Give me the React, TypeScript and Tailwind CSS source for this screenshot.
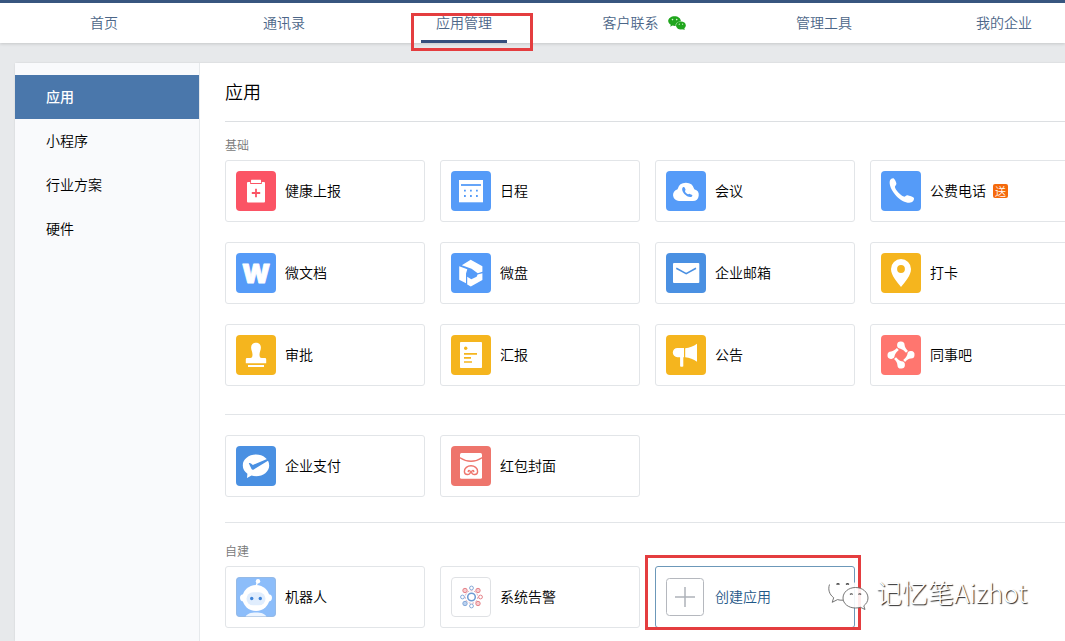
import type { ReactNode } from "react";

type AppItem = {
  name: string;
  icon: ReactNode;
  badge?: string;
};

type TileProps = {
  bg: string;
  children: ReactNode;
};

const Tile: React.FC<TileProps> = ({ bg, children }) => (
  <svg viewBox="0 0 40 40" className="size-10 shrink-0" aria-hidden="true">
    <rect width="40" height="40" rx="4" fill={bg} />
    {children}
  </svg>
);

const blue = "#559bf8";
const deepBlue = "#4a90e2";
const yellow = "#f5b51e";

const HealthIcon = () => (
  <Tile bg="#fb5465">
    <rect x="11" y="11" width="18" height="20.5" rx="1" fill="#fff" />
    <rect x="14.2" y="8" width="11.6" height="5" fill="#fb5465" />
    <rect x="15" y="8.8" width="10" height="3.2" rx="0.5" fill="#fff" />
    <path d="M20 17.8v8.4M15.8 22h8.4" stroke="#fb5465" strokeWidth="1.8" />
  </Tile>
);

const CalendarIcon = () => (
  <Tile bg={blue}>
    <rect x="8" y="9" width="24" height="22.3" fill="#fff" />
    <path d="M10 14h20" stroke={blue} strokeWidth="1.8" />
    <path
      d="M13 19.7h1.8M19 19.7h1.8M25 19.7h1.8M13 25h1.8M19 25h1.8M25 25h1.8"
      stroke={blue}
      strokeWidth="1.8"
    />
  </Tile>
);

const MeetingIcon = () => (
  <Tile bg={blue}>
    <path
      d="M13.2 30a6 6 0 0 1-1.7-11.8A8.7 8.7 0 0 1 28.3 18.2 6 6 0 0 1 26.8 30z"
      fill="#fff"
    />
    <path
      d="M16.7 16.5c.8-.7 1.8-.4 2.2.5l.6 1.5c.2.7-.6 1.2-.5 1.7.3 1.2 1.7 2.6 3 3.1.6.2 1-.6 1.7-.4l2 .8c.8.4.9 1.2.2 1.8-1.6 1.2-4.3.4-6.6-1.7-2.5-2.3-4-5.7-2.6-7.3z"
      fill={blue}
    />
  </Tile>
);

const PhoneIcon = () => (
  <Tile bg={blue}>
    <path
      d="M9 9.3c.8-1.6 2.7-2.6 3.8-1.9 1.2.8 2.3 3.4 2.6 5.2.2 1.6-1.700 2.300-1.500 3.500.6 3.100 5.600 8.400 8.900 9.500 1.400.4 2.200-1.600 3.700-1.300 1.900.4 5.400 1.400 6.300 2.500.8 1.200-.4 3.700-2.300 4.500-4.100 1.500-10.600-1.600-15.200-6.400C10.800 20.300 7.500 13.500 9 9.300z"
      fill="#fff"
    />
  </Tile>
);

const DocIcon = () => (
  <Tile bg={blue}>
    <text
      x="20"
      y="29.5"
      textAnchor="middle"
      fill="#fff"
      stroke="#fff"
      strokeWidth="0.8"
      strokeLinejoin="round"
      className="font-['Inter',sans-serif] text-[26px] font-black"
    >
      W
    </text>
  </Tile>
);

const DriveIcon = () => (
  <Tile bg={blue}>
    <path d="M10.8 12.2 19.7 6.8 31.400 13.300V18.800L26.700 20.300 20.600 15.800z" fill="#fff" />
    <path d="M8.200 13.200 16.300 16.300 15 20.500V30.200L8.200 26.800z" fill="#fff" />
    <path d="M31.400 20.300V27L19.800 33.400 16.200 31.400V23.800L20.300 26.200 25.600 23.800 26.600 21.600z" fill="#fff" />
  </Tile>
);

const MailIcon = () => (
  <Tile bg={deepBlue}>
    <rect x="7" y="10" width="26.3" height="20" rx="1" fill="#fff" />
    <path d="M10.300 15.300 20.200 20.600 30 15.300" fill="none" stroke={deepBlue} strokeWidth="1.6" />
  </Tile>
);

const PinIcon = () => (
  <Tile bg={yellow}>
    <path
      fillRule="evenodd"
      d="M20 6a10 10 0 0 0-10 10c0 6.500 6 13 10 18 4-5 10-11.500 10-18A10 10 0 0 0 20 6zm0 6.100a3.900 3.900 0 1 1 0 7.800 3.900 3.900 0 0 1 0-7.800z"
      fill="#fff"
    />
  </Tile>
);

const StampIcon = () => (
  <Tile bg={yellow}>
    <path
      d="M20 7.700c2.900 0 4.900 2 4.900 4.700 0 2.800-1.400 4.300-1.400 7 0 2.300.6 3.600 2.300 3.600H29a1.200 1.200 0 0 1 1.200 1.200v4H9.800v-4A1.200 1.200 0 0 1 11 23h3.200c1.700 0 2.300-1.300 2.300-3.600 0-2.700-1.400-4.200-1.400-7 0-2.700 2-4.700 4.900-4.700z"
      fill="#fff"
    />
    <rect x="12" y="30" width="16" height="2" fill="#fff" />
  </Tile>
);

const ReportIcon = () => (
  <Tile bg={yellow}>
    <rect x="9" y="7" width="22" height="26" rx="0.8" fill="#fff" />
    <circle cx="14.7" cy="13.3" r="1.7" fill={yellow} />
    <path d="M13 18.800h13M13 22.900h7M13 27h8" stroke={yellow} strokeWidth="1.7" />
  </Tile>
);

const NoticeIcon = () => (
  <Tile bg={yellow}>
    <path d="M18 13v9.200h-.7v9.100q-1.600 1-3.200 0V22.200h-2.700a4.600 4.600 0 0 1 0-9.200z" fill="#fff" />
    <path d="M19.200 13.200C23.500 13 27.500 11.200 31 8.700v18c-3.500-2.500-7.500-4.300-11.800-4.500z" fill="#fff" />
  </Tile>
);

const petal =
  "M20 6.500a3.600 3.600 0 0 1 3.600 3.600c.1 2.200 1.500 4 3.400 5.800l-2 1.900c-1.600-1.900-3.300-3.500-5.600-4.100A3.600 3.600 0 0 1 20 6.500z";

const ColleagueIcon = () => (
  <Tile bg="#ff766f">
    <g fill="#fff">
      <path d={petal} />
      <path d={petal} transform="rotate(90 20 20)" />
      <path d={petal} transform="rotate(180 20 20)" />
      <path d={petal} transform="rotate(270 20 20)" />
    </g>
  </Tile>
);

const PayIcon = () => (
  <Tile bg={deepBlue}>
    <path
      d="M20 8.600c7.300 0 13.200 4.800 13.200 10.800S27.300 30.200 20 30.200c-1.600 0-3.100-.2-4.500-.6L11 32l.4-4.300C8.600 25.700 6.800 22.700 6.800 19.400 6.800 13.400 12.700 8.600 20 8.600z"
      fill="#fff"
    />
    <path d="M12.800 17.300c1.200-.7 2.300.6 4.100 1.600L32.200 12.600l1 1.400-15.400 9.400c-1 .6-1.900.4-2.400-.6z" fill={deepBlue} />
  </Tile>
);

const PacketIcon = () => (
  <Tile bg="#ee756c">
    <rect x="9" y="7" width="22" height="25.7" rx="1.5" fill="#fff" />
    <g fill="none" stroke="#ee756c" strokeWidth="1.4" strokeLinecap="round">
      <path d="M8.500 11.500Q20 19 31.500 11.500" />
      <path d="M17.200 25.500c.3-1.400 2.300-1.200 2.200.5-.1 3.600-6 3.400-6-.6 0-3.200 3-5.600 6.600-5.600s6.600 2.400 6.600 5.600c0 4-5.900 4.200-6 .6-.1-1.700 1.900-1.900 2.200-.5" />
    </g>
  </Tile>
);

const RobotIcon = () => (
  <Tile bg="#8cbdfa">
    <path d="M9.500 40c1-3 5.400-4.400 10.500-4.400S29.500 37 30.500 40z" fill="#edf5ff" />
    <path d="M20 9.500 21.500 5" stroke="#fff" strokeWidth="1.4" />
    <circle cx="22" cy="4.300" r="2.200" fill="#fff" />
    <circle cx="7.600" cy="20.800" r="3.600" fill="#fff" />
    <circle cx="32.400" cy="20.800" r="3.600" fill="#fff" />
    <ellipse cx="20" cy="21" rx="13.500" ry="13" fill="#fff" />
    <rect x="10.500" y="15.300" width="19" height="13" rx="6.500" fill="#e0edfd" />
    <circle cx="15.700" cy="21.500" r="1.700" fill="#3d83d8" />
    <circle cx="24.300" cy="21.500" r="1.700" fill="#3d83d8" />
    <rect x="0.500" y="0.500" width="39" height="39" rx="3.500" fill="none" stroke="#9bb8d8" strokeOpacity="0.6" />
  </Tile>
);

const AlarmIcon = () => (
  <Tile bg="#fff">
    <rect x="0.500" y="0.500" width="39" height="39" rx="3.500" fill="none" stroke="#dfe1e4" />
    <g fill="none" strokeWidth="1">
      <circle cx="20.500" cy="20" r="3.800" stroke="#6d9bd3" strokeWidth="1.5" />
      <circle cx="20.500" cy="20" r="6.300" stroke="#dba9b6" strokeDasharray="2 1.500" />
      <g stroke="#86a9d8">
        <circle cx="20.500" cy="11" r="1.900" />
        <circle cx="20.500" cy="29" r="1.900" />
        <circle cx="11.500" cy="20" r="1.900" />
        <circle cx="14" cy="26.500" r="2.200" fill="#b9d1ef" />
      </g>
      <g stroke="#e58289" fill="#f7cdd0">
        <circle cx="14" cy="13.500" r="2.200" />
        <circle cx="27" cy="13.500" r="2.200" />
        <circle cx="27" cy="26.500" r="2.200" />
        <circle cx="29.500" cy="20" r="1.900" fill="none" />
      </g>
    </g>
  </Tile>
);

const WechatIcon = () => (
  <svg viewBox="0 0 18 14" className="h-3.5 w-[18px]" aria-hidden="true">
    <path
      d="M6.600.3C10 .3 12.800 2.400 12.900 5.200 9.600 5.300 7.300 7.400 7.700 10c-1.100.1-2.200 0-3.200-.4L2.200 10.800l.6-2C1.200 7.900.2 6.600.2 5.100.2 2.400 3.100.3 6.600.3z"
      fill="#20a61d"
    />
    <ellipse cx="12.900" cy="9.400" rx="4.900" ry="4" fill="#20a61d" />
    <path d="m14 12.900 2.700 1-.5-2z" fill="#20a61d" />
    <g fill="#d5f3cf">
      <circle cx="4.500" cy="3.600" r="0.8" />
      <circle cx="8.700" cy="3.600" r="0.8" />
      <circle cx="11.300" cy="8.200" r="0.600" />
      <circle cx="14.600" cy="8.200" r="0.600" />
    </g>
  </svg>
);

const navItems = ["首页", "通讯录", "应用管理", "客户联系", "管理工具", "我的企业"];
const menuItems = ["应用", "小程序", "行业方案", "硬件"];

const baseApps: AppItem[] = [
  { name: "健康上报", icon: <HealthIcon /> },
  { name: "日程", icon: <CalendarIcon /> },
  { name: "会议", icon: <MeetingIcon /> },
  { name: "公费电话", icon: <PhoneIcon />, badge: "送" },
  { name: "微文档", icon: <DocIcon /> },
  { name: "微盘", icon: <DriveIcon /> },
  { name: "企业邮箱", icon: <MailIcon /> },
  { name: "打卡", icon: <PinIcon /> },
  { name: "审批", icon: <StampIcon /> },
  { name: "汇报", icon: <ReportIcon /> },
  { name: "公告", icon: <NoticeIcon /> },
  { name: "同事吧", icon: <ColleagueIcon /> },
];

const payApps: AppItem[] = [
  { name: "企业支付", icon: <PayIcon /> },
  { name: "红包封面", icon: <PacketIcon /> },
];

const customApps: AppItem[] = [
  { name: "机器人", icon: <RobotIcon /> },
  { name: "系统告警", icon: <AlarmIcon /> },
];

const AppCard: React.FC<AppItem> = ({ name, icon, badge }) => (
  <a
    href="#"
    className="flex items-center rounded-[3px] border border-[#e2e5e8] p-2.5 text-sm text-black"
  >
    {icon}
    <span className="ml-[9px] pb-0.5">{name}</span>
    {badge && (
      <span className="ml-[7px] rounded-xs bg-[#f56a0c] px-0.5 text-[11px] leading-[14px] text-white">
        {badge}
      </span>
    )}
  </a>
);

type AppGridProps = {
  apps: AppItem[];
  children?: ReactNode;
};

const AppGrid: React.FC<AppGridProps> = ({ apps, children }) => (
  <div className="grid grid-cols-[repeat(4,200px)] gap-x-[15px] gap-y-5">
    {apps.map((app) => (
      <AppCard key={app.name} {...app} />
    ))}
    {children}
  </div>
);

const Watermark = () => (
  <div className="pointer-events-none absolute top-2 left-[172px] flex items-center gap-[7px]">
    <svg viewBox="0 0 42 36" className="h-9 w-[42px]" aria-hidden="true">
      <g fill="#fff" fillOpacity="0.9">
        <path d="M15.500 3C7.500 3 1.500 8 1.500 14.500c0 3.800 2 7 5.200 9.200l-1.500 4.600 5.300-2.700c2 .6 5 .8 7 .4L29.500 13C28.500 7 22.500 3 15.500 3z" />
        <path
          d="M28.500 13.500c7 0 12.500 4.700 12.500 10.500 0 3.200-1.700 5.900-4.200 7.800l1.200 3.700-4.500-2.200c-1.500.5-3.200.7-5 .7C21.500 34 16 29.800 16 24s5.500-10.500 12.500-10.500z"
          stroke="#666"
          strokeWidth="0.9"
        />
      </g>
      <g fill="none" stroke="#666">
        <path d="M2.500 10.500c-1.700 5-.2 10 4.200 13.200l-1.500 4.600 5.300-2.700c1.600.5 3.500.7 5.500.6" strokeWidth="0.9" />
        <path
          d="M9.500 10.500q1.500-1.500 3 0M19 10.500q1.500-1.500 3 0M23 20.500q1.300-1.500 2.600 0M31.500 20.500q1.300-1.500 2.600 0"
          stroke="#444"
          strokeWidth="1.2"
        />
      </g>
    </svg>
    <span className="text-[26px] leading-9 font-light whitespace-nowrap text-white [text-shadow:1px_1px_1px_#222]">
      记忆笔Aizhot
    </span>
  </div>
);

const CreateCard = () => (
  <div className="relative">
    <button
      type="button"
      className="flex w-full items-center rounded-[3px] border border-[#6c98b9] p-2.5 text-sm text-[#1f5888]"
    >
      <svg viewBox="0 0 40 40" className="size-10 shrink-0" aria-hidden="true">
        <rect x="0.500" y="1.500" width="37" height="37" rx="3" fill="none" stroke="#b5b8be" />
        <path d="M19 10v20M9 20h20" stroke="#aeb2b9" strokeWidth="1.5" />
      </svg>
      <span className="ml-[9px] pb-0.5">创建应用</span>
    </button>
    <div className="pointer-events-none absolute -top-[11px] -right-1.5 -bottom-0.5 -left-2.5 border-3 border-[#e43d3f]" />
    <Watermark />
  </div>
);

const Header = () => (
  <header className="relative border-t-3 border-[#38567f] bg-white shadow-[0_1px_3px_rgba(0,0,0,0.15)]">
    <nav className="flex h-10 pl-3.5">
      {navItems.map((item) => (
        <div key={item} className="flex w-[180px] shrink-0 justify-center">
          <a href="#" className="relative flex items-center gap-[9px] px-[15px] text-sm text-[#4c6688]">
            <span className="pb-0.5">{item}</span>
            {item === "客户联系" && <WechatIcon />}
            {item === "应用管理" && (
              <>
                <span className="absolute inset-x-0 bottom-0 h-[3px] bg-[#354f7d]" />
                <span className="pointer-events-none absolute -right-[26px] -bottom-2 top-2.5 -left-2.5 border-3 border-[#e43d3f]" />
              </>
            )}
          </a>
        </div>
      ))}
    </nav>
  </header>
);

const Sidebar = () => (
  <aside className="w-[185px] shrink-0 border-r border-[#e6e9ec] bg-[#f9fafc] pt-3">
    {menuItems.map((item, i) => (
      <a
        key={item}
        href="#"
        className={
          i === 0
            ? "flex h-11 items-center bg-[#4a77ab] pb-0.5 pl-[31px] text-sm font-medium text-white"
            : "flex h-11 items-center pb-0.5 pl-[31px] text-sm text-black"
        }
      >
        {item}
      </a>
    ))}
  </aside>
);

const App: React.FC = () => {
  return (
    <div className="flex min-h-screen flex-col overflow-hidden bg-[#e7e9eb] font-['Noto_Sans_CJK_SC',sans-serif] font-[350]">
      <Header />
      <div className="mt-5 ml-[15px] flex flex-1 rounded-tl-xs bg-white shadow-[0_0_2px_rgba(0,0,0,0.12)]">
        <Sidebar />
        <main className="min-w-0 flex-1 pb-3 pl-[25px]">
          <h1 className="flex h-[59px] items-center border-b border-[#dcdfe2] pb-0.5 text-lg">应用</h1>
          <section className="pt-3.5">
            <h2 className="mb-1.5 text-xs leading-[18px] text-[#787878]">基础</h2>
            <AppGrid apps={baseApps} />
          </section>
          <section className="mt-7 border-t border-[#e2e5e8] pt-5">
            <AppGrid apps={payApps} />
          </section>
          <section className="mt-[25px] border-t border-[#e2e5e8] pt-[19px]">
            <h2 className="mb-1.5 text-xs leading-[18px] text-[#787878]">自建</h2>
            <AppGrid apps={customApps}>
              <CreateCard />
            </AppGrid>
          </section>
        </main>
      </div>
    </div>
  );
};

export default App;
